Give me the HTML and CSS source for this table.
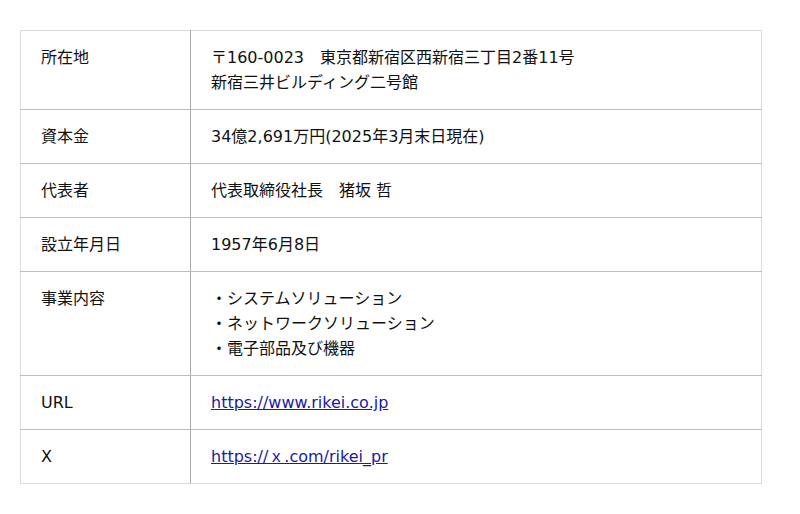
FILE: index.html
```html
<!DOCTYPE html>
<html>
<head>
<meta charset="utf-8">
<link rel="stylesheet" href="styles.css">
</head>
<body>
<div class="wrap">
<table class="info">
<tr><th>所在地</th><td>〒160-0023　東京都新宿区西新宿三丁目2番11号<br>新宿三井ビルディング二号館</td></tr>
<tr><th>資本金</th><td>34億2,691万円(2025年3月末日現在)</td></tr>
<tr><th>代表者</th><td>代表取締役社長　猪坂 哲</td></tr>
<tr><th>設立年月日</th><td>1957年6月8日</td></tr>
<tr><th>事業内容</th><td>・システムソリューション<br>・ネットワークソリューション<br>・電子部品及び機器</td></tr>
<tr><th>URL</th><td><a href="#">https://www.rikei.co.jp</a></td></tr>
<tr><th>X</th><td><a href="#">https://ｘ.com/rikei_pr</a></td></tr>
</table>
</div>
</body>
</html>
```
FILE: styles.css
```css
html, body { margin: 0; padding: 0; background: #fff; }
.wrap { padding: 30px 38px 30px 20px; }
.info {
  width: 742px;
  border-collapse: collapse;
  border: 1px solid #dcdcdc;
  font-family: "DejaVu Sans", "Noto Sans CJK JP", sans-serif;
  font-size: 16px;
  line-height: 25px;
  color: #111;
}
.info th, .info td {
  text-align: left;
  vertical-align: top;
  font-weight: normal;
  padding: 14px 20px 14px 20px;
  border-bottom: 1px solid #bdbdbd;
}
.info tr:last-child th, .info tr:last-child td { border-bottom: 1px solid #dcdcdc; }
.info th { width: 129px; border-right: 1px solid #a8a8a8; }
.info a { color: #1a1aa6; text-decoration: underline; }
```
